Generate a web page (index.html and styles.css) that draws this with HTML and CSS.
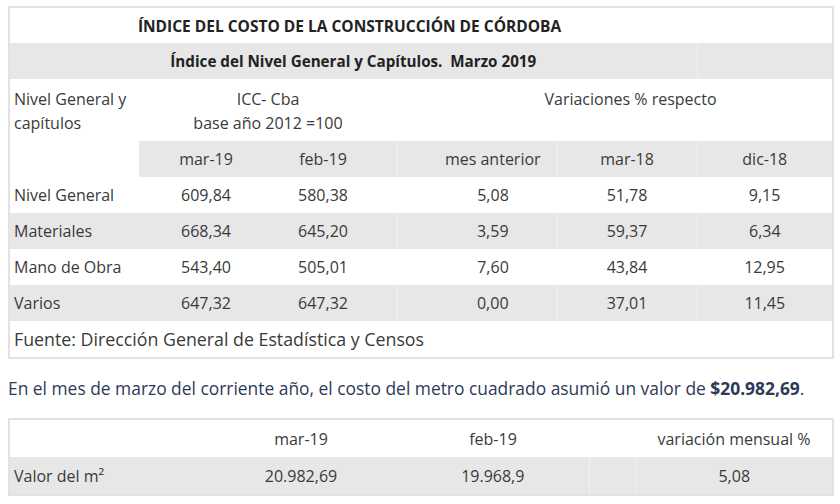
FILE: index.html
```html
<!DOCTYPE html>
<html lang="es">
<head>
<meta charset="utf-8">
<title>Índice del Costo de la Construcción de Córdoba</title>
<link rel="stylesheet" href="styles.css">
</head>
<body>
<div class="page">
  <table class="icc">
    <colgroup>
      <col class="c-name">
      <col class="c-mar19">
      <col class="c-feb19">
      <col class="c-gap1">
      <col class="c-gap2">
      <col class="c-mes">
      <col class="c-mar18">
      <col class="c-dic18">
    </colgroup>
    <tr class="row-title">
      <td colspan="7" class="title main">ÍNDICE DEL COSTO DE LA CONSTRUCCIÓN DE CÓRDOBA</td>
      <td></td>
    </tr>
    <tr class="row-sub shade">
      <td colspan="7" class="title subtitle">Índice del Nivel General y Capítulos.&nbsp; Marzo 2019</td>
      <td class="sep"></td>
    </tr>
    <tr class="row-head">
      <td rowspan="2" class="name top">Nivel General y<br>capítulos</td>
      <td colspan="3" class="top">ICC- Cba<br>base año 2012 =100</td>
      <td></td>
      <td colspan="3" class="top">Variaciones % respecto</td>
    </tr>
    <tr class="shade">
      <td>mar-19</td>
      <td>feb-19</td>
      <td></td>
      <td class="sep"></td>
      <td>mes anterior</td>
      <td class="sep">mar-18</td>
      <td class="sep">dic-18</td>
    </tr>
    <tr>
      <td class="name">Nivel General</td>
      <td>609,84</td><td>580,38</td><td></td><td></td>
      <td>5,08</td><td>51,78</td><td>9,15</td>
    </tr>
    <tr class="shade">
      <td class="name">Materiales</td>
      <td>668,34</td><td>645,20</td><td></td><td class="sep"></td>
      <td>3,59</td><td class="sep">59,37</td><td class="sep">6,34</td>
    </tr>
    <tr>
      <td class="name">Mano de Obra</td>
      <td>543,40</td><td>505,01</td><td></td><td></td>
      <td>7,60</td><td>43,84</td><td>12,95</td>
    </tr>
    <tr class="shade">
      <td class="name">Varios</td>
      <td>647,32</td><td>647,32</td><td></td><td class="sep"></td>
      <td>0,00</td><td class="sep">37,01</td><td class="sep">11,45</td>
    </tr>
    <tr>
      <td colspan="8" class="name source">Fuente: Dirección General de Estadística y Censos</td>
    </tr>
  </table>

  <p class="lead">En el mes de marzo del corriente año, el costo del metro cuadrado asumió un valor de <strong>$20.982,69</strong>.</p>

  <table class="m2">
    <colgroup>
      <col class="m-name">
      <col class="m-a">
      <col class="m-b">
      <col class="m-gap">
      <col class="m-c">
    </colgroup>
    <tr>
      <td></td>
      <td>mar-19</td>
      <td>feb-19</td>
      <td></td>
      <td>variación mensual %</td>
    </tr>
    <tr class="shade">
      <td class="name">Valor del m²</td>
      <td>20.982,69</td>
      <td>19.968,9</td>
      <td class="sep"></td>
      <td class="sep">5,08</td>
    </tr>
  </table>
</div>
</body>
</html>
```

FILE: styles.css
```css
html, body {
  margin: 0;
  padding: 0;
  background: #ffffff;
}

body {
  font-family: "Open Sans", "Noto Sans", "DejaVu Sans", sans-serif;
  color: #3a3a3a;
}

.page {
  padding: 6px 8px 0 8px;
}

table {
  width: 824px;
  border-collapse: collapse;
  table-layout: fixed;
  border: 2px solid #e2e2e2;
  font-size: 16px;
}

td {
  padding: 0 4px;
  height: 36px;
  text-align: center;
  vertical-align: middle;
  white-space: nowrap;
  line-height: 20px;
}

.shade td {
  background: #e7e7e7;
}

.shade td.sep {
  border-left: 1px solid #f1f1f1;
}

.c-name { width: 130px; }
.c-mar19 { width: 134px; }
.c-feb19 { width: 100px; }
.c-gap1 { width: 24px; }
.c-gap2 { width: 32px; }
.c-mes { width: 128px; }
.c-mar18 { width: 140px; }
.c-dic18 { width: 136px; }

.title {
  font-weight: 700;
  font-size: 15.5px;
  color: #222;
}

.main {
  padding-right: 12px;
}

.subtitle {
  font-size: 15.2px;
}

.row-title td {
  height: 35px;
}

.row-head td {
  height: 54px;
  line-height: 24px;
}

.top {
  vertical-align: top;
  padding-top: 8px;
}

.name {
  text-align: left;
}

.row-head .name {
  background: #fff;
}

.source {
  font-size: 17.8px;
}

.lead {
  margin: 17px 0 18px 0;
  font-size: 17.4px;
  line-height: 24px;
  color: #2d3a57;
}

.lead strong {
  font-weight: 700;
}

.m2 td {
  height: 37px;
}

.m-name { width: 196px; }
.m-a { width: 192px; }
.m-b { width: 192px; }
.m-gap { width: 47px; }
.m-c { width: 197px; }
```
